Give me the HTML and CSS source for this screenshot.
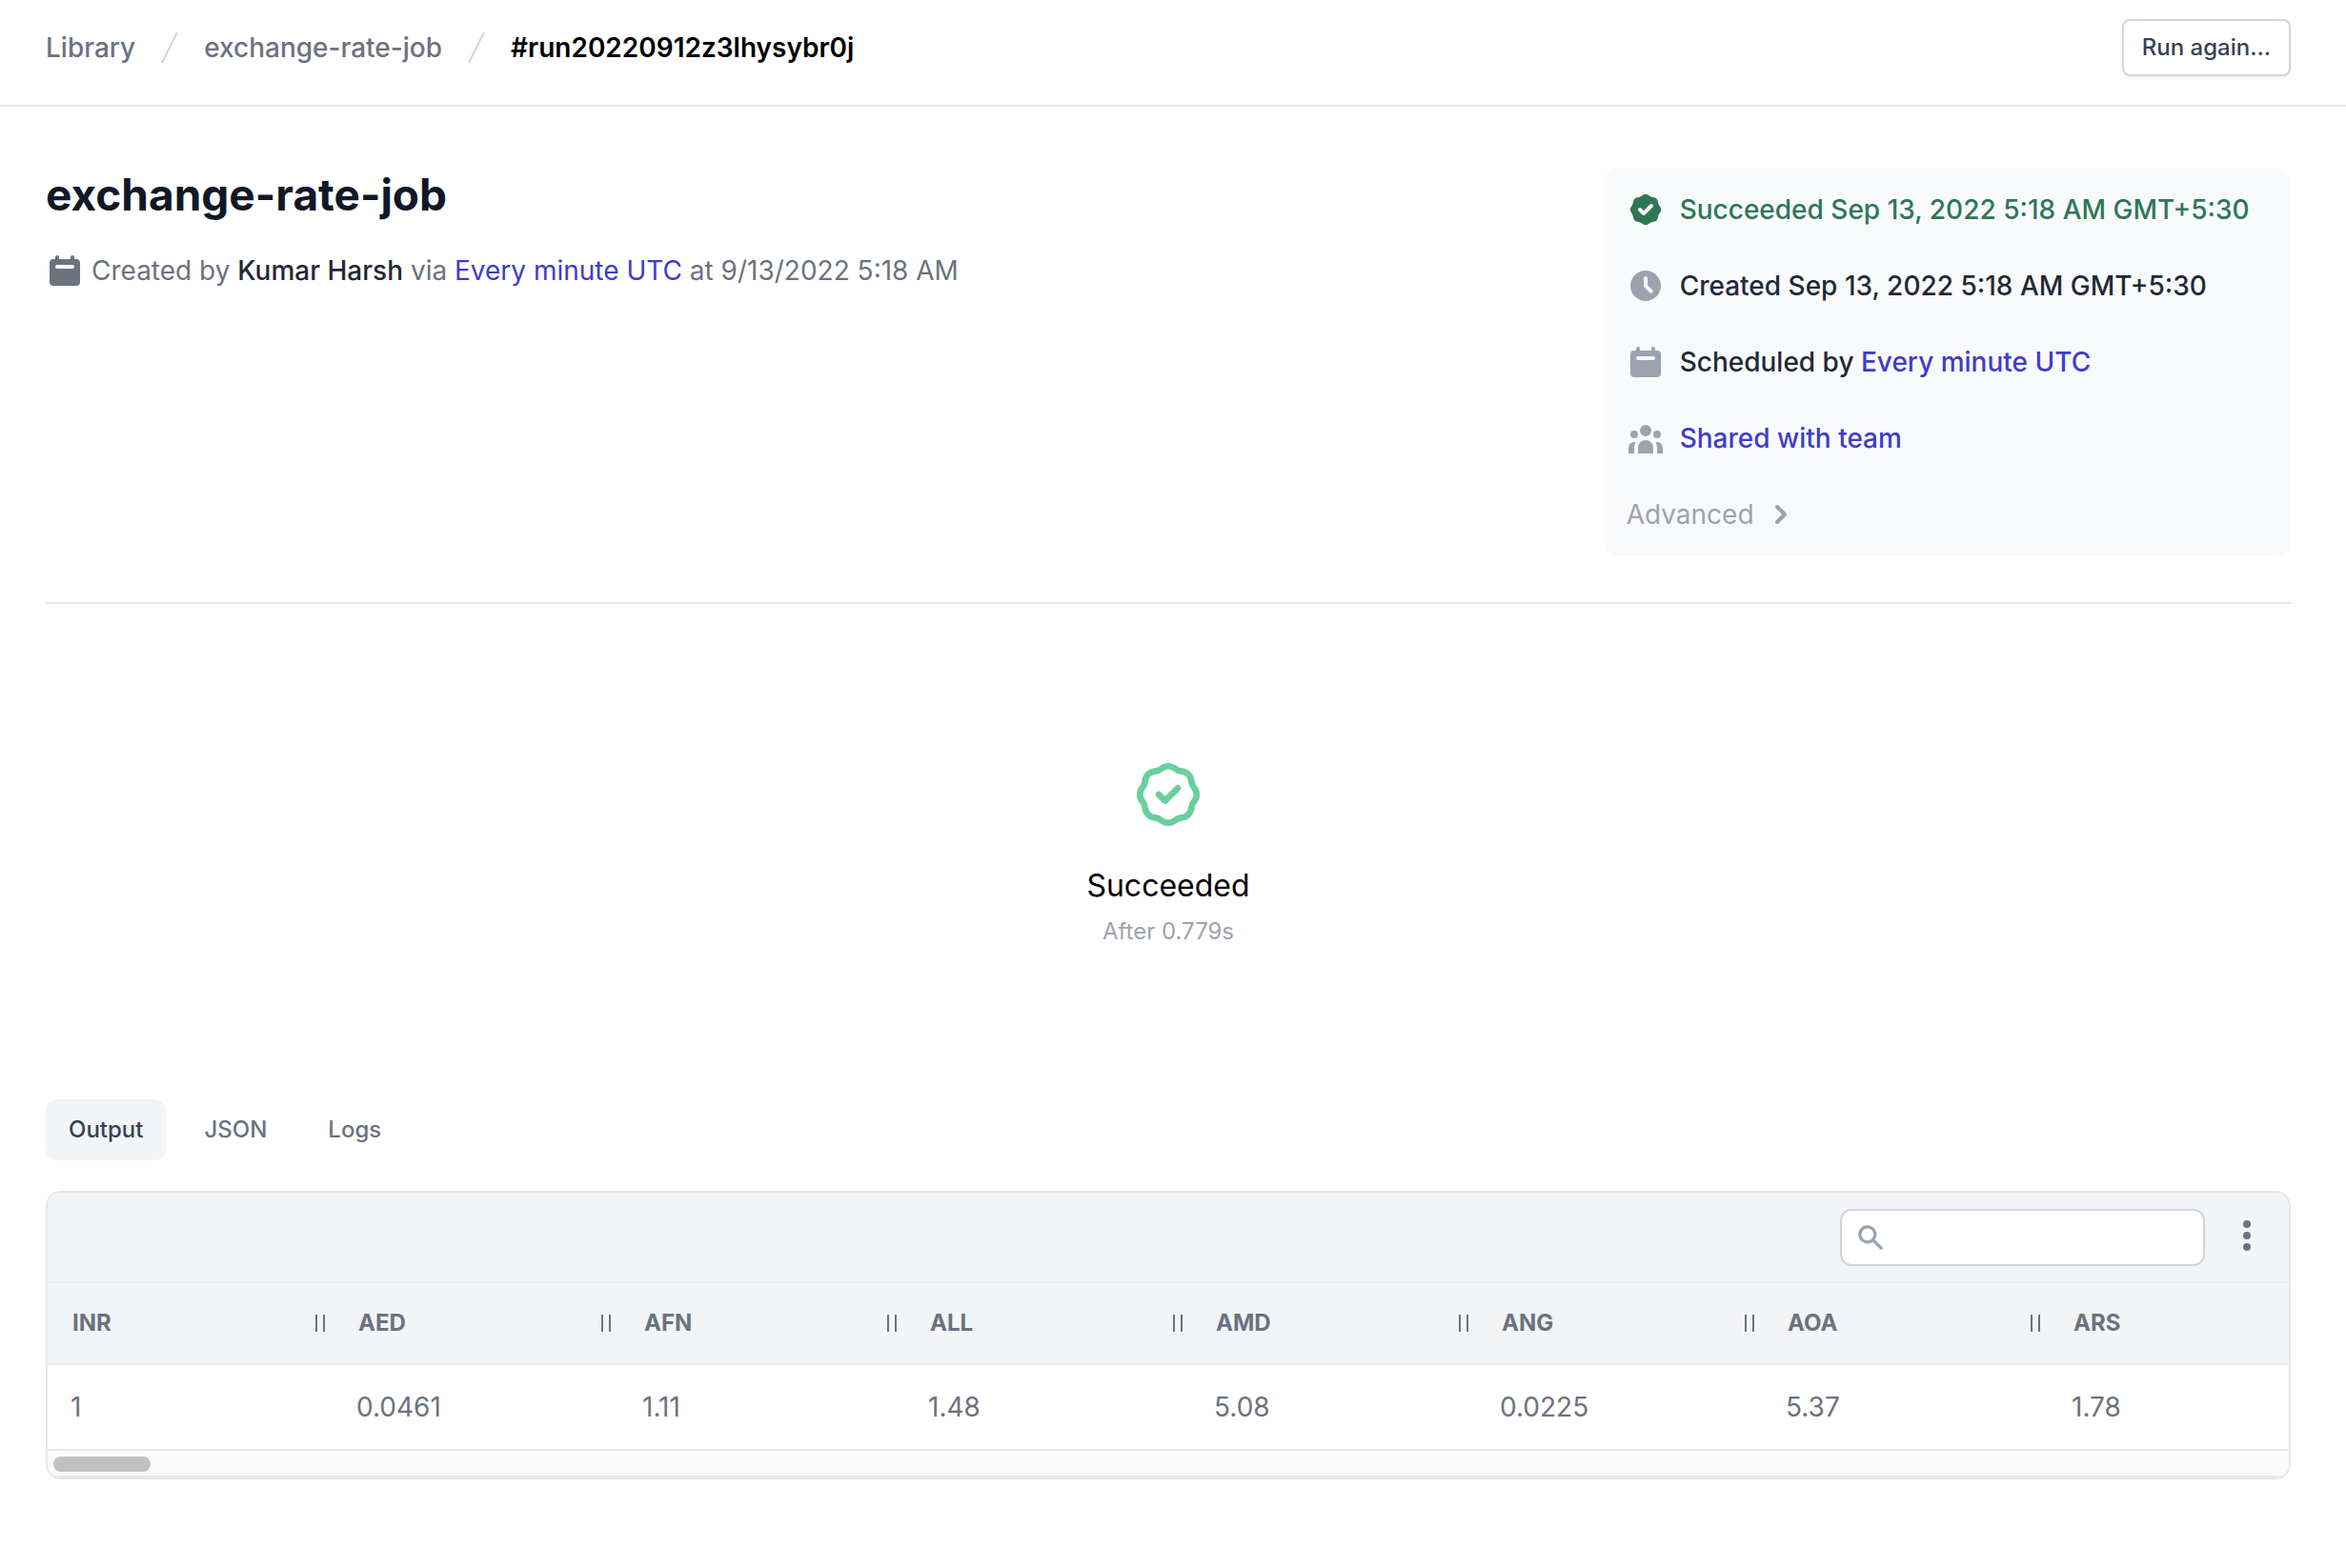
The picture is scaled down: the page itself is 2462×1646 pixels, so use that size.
FILE: index.html
```html
<!DOCTYPE html>
<html lang="en">

<head>
    <title>exchange-rate-job</title>
    <meta charset="UTF-8">
    <meta name="viewport" content="width=device-width, initial-scale=1">
    <link rel="stylesheet" href="styles.css">
</head>

<body>
    <!-- shared icons -->
    <svg class="sprite" aria-hidden="true">
        <symbol id="slash" viewBox="0 0 20 20"><path d="M5.555 17.776l8-16 .894.448-8 16-.894-.448z"/></symbol>
        <symbol id="calendar" viewBox="0 0 20 20"><path fill-rule="evenodd" d="M6 2a1 1 0 00-1 1v1H4a2 2 0 00-2 2v10a2 2 0 002 2h12a2 2 0 002-2V6a2 2 0 00-2-2h-1V3a1 1 0 10-2 0v1H7V3a1 1 0 00-1-1zm0 5a1 1 0 000 2h8a1 1 0 100-2H6z" clip-rule="evenodd"/></symbol>
    </svg>

    <header class="topbar">
        <nav class="breadcrumb" aria-label="Breadcrumb">
            <a href="#">Library</a>
            <svg class="icon slash"><use href="#slash"/></svg>
            <a href="#">exchange-rate-job</a>
            <svg class="icon slash"><use href="#slash"/></svg>
            <a href="#" class="current">#run20220912z3lhysybr0j</a>
        </nav>
        <button type="button" class="run-again">Run again...</button>
    </header>

    <main>
        <section class="overview">
            <div class="summary">
                <h1>exchange-rate-job</h1>
                <p class="byline">
                    <svg class="icon"><use href="#calendar"/></svg>
                    <span>Created by <b>Kumar Harsh</b> via <a href="#">Every minute UTC</a> at 9/13/2022 5:18 AM</span>
                </p>
            </div>
            <ul class="details">
                <li class="success">
                    <svg class="icon" viewBox="0 0 20 20"><path fill-rule="evenodd" d="M6.267 3.455a3.066 3.066 0 001.745-.723 3.066 3.066 0 013.976 0 3.066 3.066 0 001.745.723 3.066 3.066 0 012.812 2.812c.051.643.304 1.254.723 1.745a3.066 3.066 0 010 3.976 3.066 3.066 0 00-.723 1.745 3.066 3.066 0 01-2.812 2.812 3.066 3.066 0 00-1.745.723 3.066 3.066 0 01-3.976 0 3.066 3.066 0 00-1.745-.723 3.066 3.066 0 01-2.812-2.812 3.066 3.066 0 00-.723-1.745 3.066 3.066 0 010-3.976 3.066 3.066 0 00.723-1.745 3.066 3.066 0 012.812-2.812zm7.44 5.252a1 1 0 00-1.414-1.414L9 10.586 7.707 9.293a1 1 0 00-1.414 1.414l2 2a1 1 0 001.414 0l4-4z" clip-rule="evenodd"/></svg>
                    <span>Succeeded Sep 13, 2022 5:18 AM GMT+5:30</span>
                </li>
                <li>
                    <svg class="icon" viewBox="0 0 20 20"><path fill-rule="evenodd" d="M10 18a8 8 0 100-16 8 8 0 000 16zm1-12a1 1 0 10-2 0v4a1 1 0 00.293.707l2.828 2.829a1 1 0 101.415-1.415L11 9.586V6z" clip-rule="evenodd"/></svg>
                    <span>Created Sep 13, 2022 5:18 AM GMT+5:30</span>
                </li>
                <li>
                    <svg class="icon"><use href="#calendar"/></svg>
                    <span>Scheduled by <a href="#">Every minute UTC</a></span>
                </li>
                <li>
                    <svg class="icon" viewBox="0 0 20 20"><path d="M13 6a3 3 0 11-6 0 3 3 0 016 0zM18 8a2 2 0 11-4 0 2 2 0 014 0zM14 15a4 4 0 00-8 0v3h8v-3zM6 8a2 2 0 11-4 0 2 2 0 014 0zM16 18v-3a5.972 5.972 0 00-.75-2.906A3.005 3.005 0 0119 15v3h-3zM4.750 12.094A5.973 5.973 0 004 15v3H1v-3a3 3 0 013.750-2.906z"/></svg>
                    <a href="#">Shared with team</a>
                </li>
                <li>
                    <button type="button" class="advanced">
                        Advanced
                        <svg class="icon" viewBox="0 0 20 20"><path fill-rule="evenodd" d="M7.293 14.707a1 1 0 010-1.414L10.586 10 7.293 6.707a1 1 0 011.414-1.414l4 4a1 1 0 010 1.414l-4 4a1 1 0 01-1.414 0z" clip-rule="evenodd"/></svg>
                    </button>
                </li>
            </ul>
        </section>

        <section class="result">
            <svg class="badge" viewBox="0 0 24 24"><path d="M9 12l2 2 4-4M7.835 4.697a3.42 3.42 0 001.946-.806 3.42 3.42 0 014.438 0 3.42 3.42 0 001.946.806 3.42 3.42 0 013.138 3.138 3.42 3.42 0 00.806 1.946 3.42 3.42 0 010 4.438 3.42 3.42 0 00-.806 1.946 3.42 3.42 0 01-3.138 3.138 3.42 3.42 0 00-1.946.806 3.42 3.42 0 01-4.438 0 3.42 3.42 0 00-1.946-.806 3.42 3.42 0 01-3.138-3.138 3.42 3.42 0 00-.806-1.946 3.42 3.42 0 010-4.438 3.42 3.42 0 00.806-1.946 3.42 3.42 0 013.138-3.138z"/></svg>
            <h2>Succeeded</h2>
            <p>After 0.779s</p>
        </section>

        <div class="tabs">
            <button type="button" class="active">Output</button>
            <button type="button">JSON</button>
            <button type="button">Logs</button>
        </div>

        <section class="output">
            <div class="toolbar">
                <label class="search">
                    <svg viewBox="0 0 20 20"><path fill-rule="evenodd" d="M8 4a4 4 0 100 8 4 4 0 000-8zM2 8a6 6 0 1110.890 3.476l4.817 4.817a1 1 0 01-1.414 1.414l-4.816-4.816A6 6 0 012 8z" clip-rule="evenodd"/></svg>
                    <input type="search" aria-label="Search">
                </label>
                <button type="button" class="more" aria-label="More options">
                    <svg class="icon" viewBox="0 0 20 20"><path d="M10 6a2 2 0 110-4 2 2 0 010 4zM10 12a2 2 0 110-4 2 2 0 010 4zM10 18a2 2 0 110-4 2 2 0 010 4z"/></svg>
                </button>
            </div>
            <div class="table-wrap">
                <table>
                    <thead>
                        <tr>
                            <th><div>INR <i></i></div></th>
                            <th><div>AED <i></i></div></th>
                            <th><div>AFN <i></i></div></th>
                            <th><div>ALL <i></i></div></th>
                            <th><div>AMD <i></i></div></th>
                            <th><div>ANG <i></i></div></th>
                            <th><div>AOA <i></i></div></th>
                            <th><div>ARS <i></i></div></th>
                        </tr>
                    </thead>
                    <tbody>
                        <tr>
                            <td>1</td>
                            <td>0.0461</td>
                            <td>1.11</td>
                            <td>1.48</td>
                            <td>5.08</td>
                            <td>0.0225</td>
                            <td>5.37</td>
                            <td>1.78</td>
                        </tr>
                    </tbody>
                </table>
            </div>
            <div class="scrollbar"><div class="thumb"></div></div>
        </section>
    </main>
</body>

</html>
```
FILE: styles.css
```css
* {
    box-sizing: border-box;
}

body {
    margin: 0;
    background-color: #fff;
    color: #6b7280;
    font-family: Inter, "Liberation Sans", sans-serif;
    font-size: 28px;
    line-height: 40px;
}

h1, h2, p, ul {
    margin: 0;
    padding: 0;
}

a {
    color: #3f3cc9;
    text-decoration: none;
}

button {
    padding: 0;
    background: none;
    border: none;
    color: inherit;
    font: inherit;
    cursor: pointer;
}

.sprite {
    display: none;
}

.icon {
    flex: none;
    width: 40px;
    height: 40px;
    fill: currentColor;
}

/* header */
.topbar {
    display: flex;
    align-items: center;
    justify-content: space-between;
    padding: 20px 58px 30px 48px;
    border-bottom: 2px solid #e5e7eb;
}

.breadcrumb {
    display: flex;
    align-items: center;
    gap: 16px;
    font-weight: 500;
}

.breadcrumb a {
    color: #6b7280;
}

.breadcrumb .current {
    color: #000;
    font-weight: 600;
}

.slash {
    color: #d1d5db;
}

.run-again {
    height: 60px;
    padding: 0 19px;
    border: 2px solid #d1d5db;
    border-radius: 8px;
    box-shadow: 0 2px 4px rgba(0, 0, 0, .05);
    background-color: #fff;
    color: #374151;
    font-size: 24px;
    font-weight: 500;
}

main {
    padding: 64px 58px 64px 48px;
}

/* run summary */
.overview {
    display: grid;
    grid-template-columns: repeat(3, minmax(0, 1fr));
    gap: 96px;
    padding-bottom: 48px;
    border-bottom: 2px solid #e5e7eb;
}

.summary {
    grid-column: span 2;
}

h1 {
    color: #111827;
    font-size: 46px;
    font-weight: 700;
    line-height: 56px;
}

.byline {
    display: flex;
    align-items: center;
    gap: 8px;
    margin-top: 32px;
}

.byline b {
    color: #1f2937;
    font-weight: 500;
}

.details {
    display: flex;
    flex-direction: column;
    gap: 40px;
    padding: 24px;
    border-radius: 16px;
    background-color: #f9fafb;
    color: #1f2937;
    font-weight: 500;
    list-style: none;
}

.details li {
    display: flex;
    align-items: center;
    gap: 16px;
    white-space: nowrap;
}

.details .icon {
    color: #9ca3af;
}

.details .success,
.details .success .icon {
    color: #2f7657;
}

.advanced {
    display: flex;
    align-items: center;
    gap: 8px;
    color: #9ca3af;
    font-weight: 400;
}

/* run result */
.result {
    display: flex;
    flex-direction: column;
    align-items: center;
    padding: 160px 0;
}

.badge {
    width: 80px;
    height: 80px;
    fill: none;
    stroke: #68d09d;
    stroke-width: 2;
    stroke-linecap: round;
    stroke-linejoin: round;
}

.result h2 {
    margin-top: 32px;
    color: #000;
    font-size: 32px;
    font-weight: 400;
    line-height: 48px;
}

.result p {
    margin-top: 8px;
    color: #9ca3af;
    font-size: 24px;
    line-height: 32px;
}

.tabs {
    display: flex;
    gap: 16px;
    margin-bottom: 32px;
    font-size: 24px;
    font-weight: 500;
}

.tabs button {
    height: 64px;
    padding: 0 24px;
    border-radius: 12px;
}

.tabs .active {
    background-color: #f3f4f6;
    color: #374151;
}

/* output table */
.output {
    overflow: hidden;
    border: 2px solid #e5e7eb;
    border-radius: 16px;
}

.toolbar {
    display: flex;
    align-items: center;
    justify-content: flex-end;
    gap: 24px;
    padding: 17px 24px 16px;
    border-bottom: 2px solid #e5e7eb;
    background-color: #f3f4f6;
}

.search {
    display: flex;
    align-items: center;
    gap: 8px;
    width: 383px;
    height: 60px;
    padding: 0 14px;
    border: 2px solid #d1d5db;
    border-radius: 12px;
    background-color: #fff;
}

.search svg {
    flex: none;
    width: 32px;
    height: 32px;
    fill: #9ca3af;
}

.search input {
    flex: 1;
    min-width: 0;
    border: none;
    outline: none;
    background: none;
    font: inherit;
}

.more {
    display: flex;
    padding-bottom: 5px;
}

.table-wrap {
    overflow: hidden;
}

table {
    table-layout: fixed;
    width: 2400px;
    border-collapse: separate;
    border-spacing: 0;
}

th, td {
    width: 300px;
    border-bottom: 2px solid #e5e7eb;
    text-align: left;
}

th {
    height: 86px;
    padding: 0 9px 0 26px;
    background-color: #f3f4f6;
    font-size: 24px;
    font-weight: 700;
}

th div {
    display: flex;
    align-items: center;
    justify-content: space-between;
}

/* column resize handle */
th i {
    width: 10px;
    height: 18px;
    border: solid #6b7280;
    border-width: 0 2px;
}

td {
    height: 90px;
    padding: 0 24px;
}

.scrollbar {
    padding: 6px 6px 4px;
    border-bottom: 2px solid #e8e8e8;
    background-color: #fafafa;
}

.thumb {
    width: 102px;
    height: 16px;
    border-radius: 8px;
    background-color: #c1c1c1;
}
```
